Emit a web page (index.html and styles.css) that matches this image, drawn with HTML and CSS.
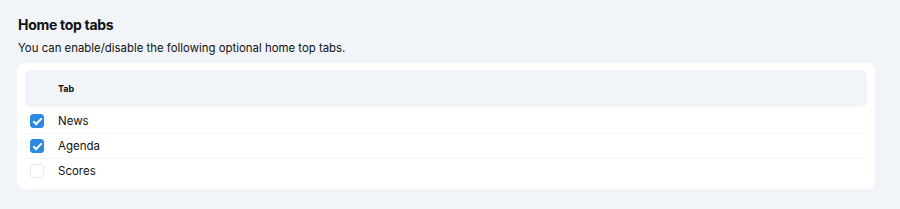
FILE: index.html
```
<!DOCTYPE html>
<html lang="en">
<head>
    <meta charset="UTF-8">
    <title>Home top tabs</title>
    <link rel="stylesheet" href="styles.css">
</head>
<body>
    <div class="section">
        <h2 class="section-title">Home top tabs</h2>
        <p class="section-desc">You can enable/disable the following optional home top tabs.</p>
        <div class="card">
            <div class="table-head">
                <span class="col-check"></span>
                <span class="col-name">Tab</span>
            </div>
            <label class="table-row">
                <span class="col-check"><span class="checkbox checked"></span></span>
                <span class="col-name">News</span>
            </label>
            <label class="table-row">
                <span class="col-check"><span class="checkbox checked"></span></span>
                <span class="col-name">Agenda</span>
            </label>
            <label class="table-row">
                <span class="col-check"><span class="checkbox"></span></span>
                <span class="col-name">Scores</span>
            </label>
        </div>
    </div>
</body>
</html>
```
FILE: styles.css
```
body {
    margin: 0;
    background-color: #f1f4f9;
    font-family: Inter, "Open Sans", sans-serif;
    color: #111;
}
.section {
    padding: 14px 25px 20px 17px;
}
.section-title {
    margin: 0 0 0 1px;
    font-size: 14px;
    font-weight: 700;
    letter-spacing: -0.3px;
    line-height: 22px;
}
.section-desc {
    margin: 3px 0 6px 1px;
    font-size: 11.4px;
    line-height: 18px;
}
.card {
    background-color: #fff;
    border-radius: 8px;
    padding: 7px 8px 6px 8px;
}
.table-head {
    display: flex;
    align-items: center;
    height: 37px;
    margin-bottom: 2px;
    background-color: #f1f4f9;
    border-radius: 5px;
    font-size: 9px;
    font-weight: 700;
}
.col-check {
    width: 33px;
    box-sizing: border-box;
    display: flex;
    padding-left: 5px;
}
.table-row {
    display: flex;
    align-items: center;
    height: 24px;
    font-size: 11.5px;
    border-bottom: 1px solid #f1f4f9;
    cursor: pointer;
}
.table-row:last-child {
    border-bottom: none;
}
.checkbox {
    width: 14px;
    height: 14px;
    box-sizing: border-box;
    border-radius: 3px;
    border: 1px solid #e6e9f0;
    background-color: #fff;
    position: relative;
}
.checkbox.checked {
    background-color: #2a8ae2;
    border-color: #2a8ae2;
}
.checkbox.checked::after {
    content: "";
    position: absolute;
    left: 4px;
    top: 1px;
    width: 3px;
    height: 7px;
    border: solid #fff;
    border-width: 0 2px 2px 0;
    transform: rotate(45deg);
}
```
